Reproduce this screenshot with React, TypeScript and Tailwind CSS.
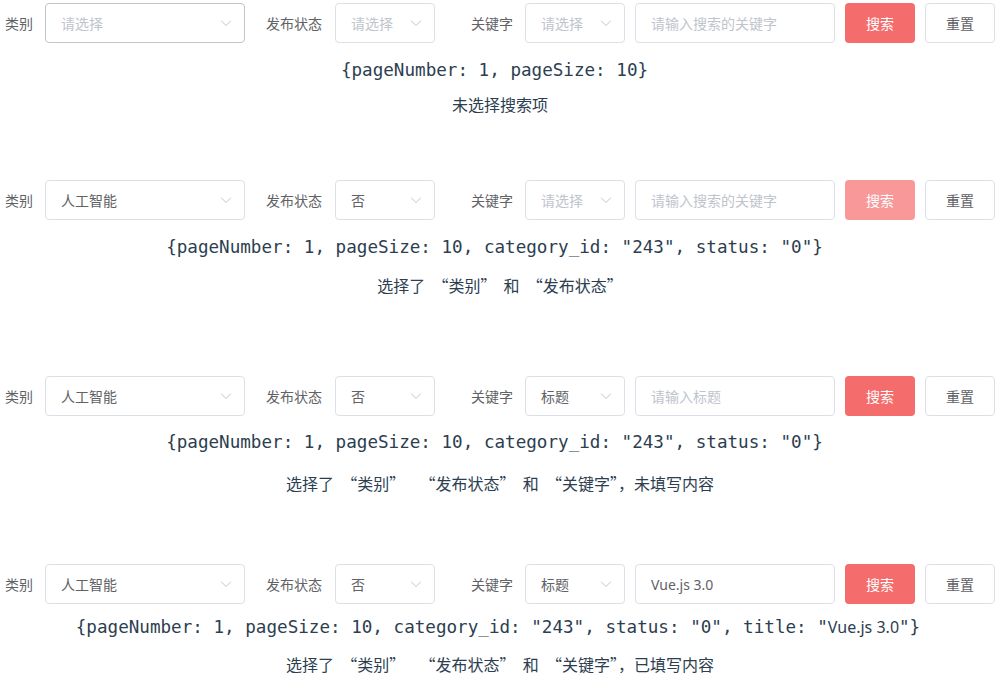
import React from "react";

const CJK = '"Noto Sans CJK SC", "Noto Sans", sans-serif';
const MONO = '"DejaVu Sans Mono", "Liberation Mono", monospace';

function Chevron() {
  return (
    <svg width="12" height="12" viewBox="0 0 12 12" fill="none" className="shrink-0">
      <path d="M1.5 4 L6 8.5 L10.5 4" stroke="#c0c4cc" strokeWidth="1" strokeLinecap="round" strokeLinejoin="round" />
    </svg>
  );
}

function Select({ w, value, hover }: { w: string; value?: string; hover?: boolean }) {
  return (
    <div
      className={`${w} h-[40px] rounded-[4px] border ${hover ? "border-[#c0c4cc]" : "border-[#dcdfe6]"} bg-white flex items-center justify-between pl-[15px] pr-[12px]`}
    >
      <span className={`text-[14px] ${value ? "text-[#606266]" : "text-[#c0c4cc]"}`}>{value ?? "请选择"}</span>
      <Chevron />
    </div>
  );
}

function FormRow({
  cat,
  status,
  kw,
  input,
  placeholder,
  disabled,
  hover,
}: {
  cat?: string;
  status?: string;
  kw?: string;
  input?: string;
  placeholder: string;
  disabled?: boolean;
  hover?: boolean;
}) {
  return (
    <div className="flex items-center pl-[5px] h-[40px] text-[14px] text-[#606266]">
      <span className="w-[40px]">类别</span>
      <Select w="w-[200px]" value={cat} hover={hover} />
      <span className="ml-[21px] w-[69px]">发布状态</span>
      <Select w="w-[100px]" value={status} />
      <span className="ml-[36px] w-[54px]">关键字</span>
      <Select w="w-[100px]" value={kw} />
      <div className="ml-[10px] w-[200px] h-[40px] rounded-[4px] border border-[#dcdfe6] bg-white flex items-center px-[15px]">
        {input ? (
          <span className="text-[#606266] text-[14px]" style={{ fontFamily: '"Noto Sans", sans-serif' }}>
            {input}
          </span>
        ) : (
          <span className="text-[#c0c4cc] text-[14px]">{placeholder}</span>
        )}
      </div>
      <div
        className={`ml-[10px] w-[70px] h-[40px] rounded-[4px] ${disabled ? "bg-[#f89898]" : "bg-[#f56c6c]"} text-white flex items-center justify-center`}
      >
        搜索
      </div>
      <div className="ml-[10px] w-[70px] h-[40px] rounded-[4px] border border-[#dcdfe6] bg-white text-[#606266] flex items-center justify-center">
        重置
      </div>
    </div>
  );
}

function Code({ children, mt, pr }: { children: React.ReactNode; mt: string; pr: string }) {
  return (
    <div
      className={`${mt} ${pr} h-[24px] leading-[24px] text-center text-[17.6px] text-[#2c3e50] whitespace-pre`}
      style={{ fontFamily: MONO }}
    >
      {children}
    </div>
  );
}

function Desc({ children, mt }: { children: React.ReactNode; mt: string }) {
  return <div className={`${mt} h-[24px] leading-[24px] text-center text-[16px] text-[#2c3e50] whitespace-pre`}>{children}</div>;
}

export default function App() {
  return (
    <div className="w-[1000px] h-[681px] bg-white overflow-hidden pt-[3px]" style={{ fontFamily: CJK }}>
      <FormRow placeholder="请输入搜索的关键字" hover />
      <Code mt="mt-[15px]" pr="pr-[11px]">{"{pageNumber: 1, pageSize: 10}"}</Code>
      <Desc mt="mt-[10px]">未选择搜索项</Desc>

      <div className="mt-[64px]">
        <FormRow cat="人工智能" status="否" placeholder="请输入搜索的关键字" disabled />
      </div>
      <Code mt="mt-[15px]" pr="pr-[11px]">{'{pageNumber: 1, pageSize: 10, category_id: "243", status: "0"}'}</Code>
      <Desc mt="mt-[14px]">{"选择了  “类别”  和  “发布状态”"}</Desc>

      <div className="mt-[79px]">
        <FormRow cat="人工智能" status="否" kw="标题" placeholder="请输入标题" />
      </div>
      <Code mt="mt-[14px]" pr="pr-[11px]">{'{pageNumber: 1, pageSize: 10, category_id: "243", status: "0"}'}</Code>
      <Desc mt="mt-[17px]">{"选择了  “类别”    “发布状态”  和  “关键字”，未填写内容"}</Desc>

      <div className="mt-[69px]">
        <FormRow cat="人工智能" status="否" kw="标题" input="Vue.js 3.0" placeholder="请输入标题" />
      </div>
      <Code mt="mt-[11px]" pr="pr-[4px]">
        {'{pageNumber: 1, pageSize: 10, category_id: "243", status: "0", title: "'}
        <span className="text-[16px]" style={{ fontFamily: '"Noto Sans", sans-serif' }}>
          Vue.js 3.0
        </span>
        {'"}'}
      </Code>
      <Desc mt="mt-[13px]">{"选择了  “类别”    “发布状态”  和  “关键字”，已填写内容"}</Desc>
    </div>
  );
}
